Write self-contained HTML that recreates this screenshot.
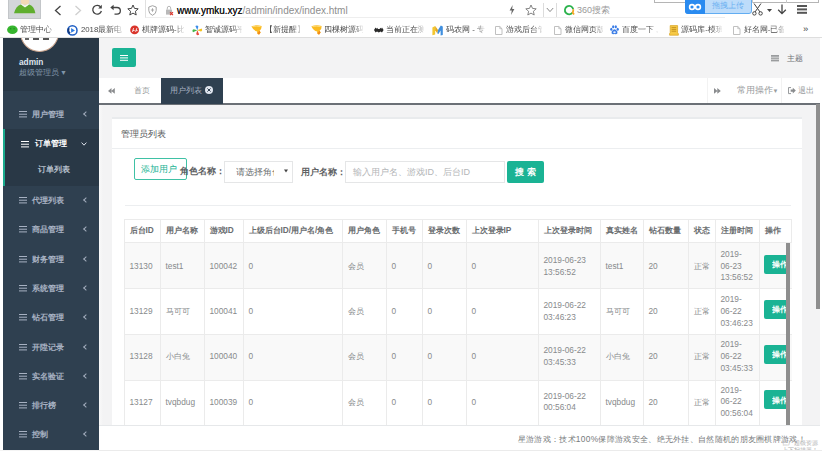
<!DOCTYPE html>
<html lang="zh">
<head>
<meta charset="utf-8">
<title>admin</title>
<style>
*{box-sizing:border-box;margin:0;padding:0}
html,body{width:822px;height:451px;overflow:hidden;background:#fff}
body{font-family:"Liberation Sans",sans-serif;font-size:8px;color:#676a6c;position:relative}
.a{position:absolute;white-space:nowrap;overflow:hidden}
.t{position:absolute;white-space:nowrap;line-height:10px;height:10px}
svg{position:absolute;overflow:visible}
/* browser chrome */
#chrome{left:0;top:0;width:822px;height:38px;background:#fff}
#bm .bt{font-size:7.8px;color:#4c4c4c;top:25px;overflow:hidden;-webkit-mask-image:linear-gradient(90deg,#000 0,#000 calc(100% - 9px),rgba(0,0,0,.15) 100%);mask-image:linear-gradient(90deg,#000 0,#000 calc(100% - 9px),rgba(0,0,0,.15) 100%)}
/* sidebar */
#side{left:3px;top:38px;width:96px;height:413px;background:#2f4050}
#side .hd{left:0;top:0;width:96px;height:53px;background:#293846}
#side .m{font-size:8.3px;font-weight:bold;color:#a7b1c2;left:29px}
#side .ic{position:absolute;left:16px;width:8px;height:1.4px;background:#a7b1c2;box-shadow:0 2.7px 0 #a7b1c2,0 5.4px 0 #a7b1c2;margin-top:-.4px}
#side .ar{left:80.5px;width:4px;height:4px;margin-top:3px;border-left:1.2px solid #a3adbd;border-bottom:1.2px solid #a3adbd;transform:rotate(45deg);font-size:0}
/* main */
#main{left:99px;top:38px;width:723px;height:413px;background:#f3f3f4}
#tb .th{font-size:8.3px;font-weight:bold;color:#6a6d6f}
#tb .td{font-size:8.3px;line-height:11.8px;color:#878a8c;white-space:nowrap}
</style>
</head>
<body>
<!-- ===== Browser chrome ===== -->
<div id="chrome" class="a">
  <!-- avatar -->
  <div class="a" style="left:8px;top:0;width:33px;height:19px;background:#d3d6d9;border:1px solid #c3c6c9;border-top:0"></div>
  <svg style="left:13px;top:0" width="24" height="14" viewBox="0 0 24 14"><path d="M1 13.2 Q3 5.6 8 4.4 L12 7 L16 4.4 Q21 5.6 22.4 13.2 Z" fill="#5fae2e"/><path d="M8 4.4 L12 7.6 L16 4.4 L14.6 3.6 L12 5.8 L9.4 3.6 Z" fill="#f4f7ee"/><ellipse cx="12" cy="1.6" rx="4.2" ry="3.2" fill="#f1d9b5"/></svg>
  <!-- nav buttons -->
  <svg style="left:54px;top:5px" width="8" height="11" viewBox="0 0 8 11"><path d="M6.5 1 L1.5 5.5 L6.5 10" fill="none" stroke="#444" stroke-width="1.3"/></svg>
  <svg style="left:74px;top:5px" width="8" height="11" viewBox="0 0 8 11"><path d="M1.5 1 L6.5 5.5 L1.5 10" fill="none" stroke="#cfcfcf" stroke-width="1.3"/></svg>
  <svg style="left:91px;top:4px" width="12" height="12" viewBox="0 0 12 12"><path d="M9.8 3.2 A4.4 4.4 0 1 0 10.4 7" fill="none" stroke="#444" stroke-width="1.3"/><path d="M10.8 0.8 L10.8 4.4 L7.2 4.4 Z" fill="#444"/></svg>
  <svg style="left:110px;top:4px" width="12" height="12" viewBox="0 0 12 12"><path d="M2 3.5 H7 A3.3 3.3 0 0 1 7 10.2 H4.5" fill="none" stroke="#444" stroke-width="1.3"/><path d="M0.3 3.5 L3.6 0.8 L3.6 6.2 Z" fill="#444"/></svg>
  <svg style="left:127px;top:4px" width="12" height="12" viewBox="0 0 12 12"><path d="M6 1 L7.5 4.4 L11.2 4.8 L8.4 7.3 L9.2 11 L6 9.1 L2.8 11 L3.6 7.3 L0.8 4.8 L4.5 4.4 Z" fill="none" stroke="#444" stroke-width="1"/></svg>
  <!-- url box -->
  <div class="a" style="left:145px;top:0;width:580px;height:18px;border:1px solid #eeeeee;border-left:1px solid #e0e0e0;border-top:0;border-right:0"></div>
  <svg style="left:148px;top:4.5px" width="9" height="11" viewBox="0 0 9 11"><path d="M4.5 0.7 L8.2 2 V5.5 Q8.2 8.8 4.5 10.3 Q0.8 8.8 0.8 5.5 V2 Z" fill="none" stroke="#9a9a9a" stroke-width="0.9"/><path d="M4.5 3.2 V6.8 M2.9 5 H6.1" stroke="#9a9a9a" stroke-width="0.8"/></svg>
  <svg style="left:165px;top:4.5px" width="9" height="11" viewBox="0 0 9 11"><rect x="1" y="4.6" width="6" height="5" fill="#b9b9b9"/><path d="M2.3 4.6 V3 A1.7 1.7 0 0 1 5.7 3 V4.6" fill="none" stroke="#b9b9b9" stroke-width="1"/><path d="M5 7.2 L8 10.2 M8 7.2 L5 10.2" stroke="#e0352b" stroke-width="1.1"/></svg>
  <div class="t" style="left:177px;top:5px;font-size:10px;line-height:12px;height:12px;color:#8e8e8e"><span style="color:#1c1c1c;text-shadow:0 0 .25px #1c1c1c">www.ymku.xyz</span>/admin/index/index.html</div>
  <!-- right side icons -->
  <svg style="left:509px;top:5px" width="6" height="10" viewBox="0 0 6 10"><path d="M3.6 0 L0.6 5.4 H2.8 L2 10 L5.4 4 H3.2 Z" fill="#666"/></svg>
  <svg style="left:525px;top:4px" width="12" height="12" viewBox="0 0 12 12"><path d="M6 1 L7.5 4.4 L11.2 4.8 L8.4 7.3 L9.2 11 L6 9.1 L2.8 11 L3.6 7.3 L0.8 4.8 L4.5 4.4 Z" fill="none" stroke="#777" stroke-width="0.9"/></svg>
  <div class="a" style="left:543px;top:3px;width:1px;height:14px;background:#dcdcdc"></div>
  <svg style="left:546px;top:7px" width="8" height="6" viewBox="0 0 8 6"><path d="M0.8 1 L4 4.6 L7.2 1" fill="none" stroke="#8a8a8a" stroke-width="1"/></svg>
  <div class="a" style="left:556px;top:3px;width:1px;height:14px;background:#dcdcdc"></div>
  <svg style="left:563px;top:4px" width="12" height="12" viewBox="0 0 12 12"><path d="M9.6 8.4 A4.2 4.2 0 1 1 10.2 5.2" fill="none" stroke="#2bb24c" stroke-width="1.8"/><path d="M10.2 5.2 A4.2 4.2 0 0 1 9.6 8.4 L11 10.4" fill="none" stroke="#f5a623" stroke-width="1.8"/></svg>
  <div class="t" style="left:577px;top:5px;font-size:9px;color:#9a9a9a">360搜索</div>
  <!-- floating box + blue upload button -->
  <div class="a" style="left:654px;top:-2px;width:165px;height:5px;background:#fff;border:1px solid #b5b5b5"></div>
  <div class="a" style="left:688px;top:0;width:1px;height:3px;background:#c9c9c9"></div>
  <div class="a" style="left:752px;top:0;width:1px;height:3px;background:#c9c9c9"></div>
  <div class="a" style="left:786px;top:0;width:1px;height:3px;background:#c9c9c9"></div>
  <div class="a" style="left:685px;top:-1px;width:66.5px;height:15px;background:#bddcfa;border:1px solid #62adf2;border-radius:0 0 3px 3px"></div>
  <div class="a" style="left:685px;top:0;width:20px;height:14px;background:#2a8bf0;border-radius:0 0 0 3px"></div>
  <svg style="left:688px;top:3px" width="14" height="8" viewBox="0 0 14 8"><circle cx="4" cy="4" r="2.4" fill="none" stroke="#fff" stroke-width="1.6"/><circle cx="10" cy="4" r="2.4" fill="none" stroke="#fff" stroke-width="1.6"/></svg>
  <div class="t" style="left:712px;top:1px;font-size:8px;color:#6cb1f1">拖拽上传</div>
  <!-- scissors, arrow, menu -->
  <svg style="left:752px;top:3px" width="11" height="13" viewBox="0 0 11 13"><path d="M2 0.5 L8 9 M9 0.5 L3 9" stroke="#444" stroke-width="1"/><circle cx="2.4" cy="10.4" r="1.7" fill="none" stroke="#444" stroke-width="1"/><circle cx="8.6" cy="10.4" r="1.7" fill="none" stroke="#444" stroke-width="1"/></svg>
  <svg style="left:767px;top:9px" width="5" height="3" viewBox="0 0 5 3"><path d="M0 0 H5 L2.5 3 Z" fill="#444"/></svg>
  <svg style="left:777px;top:4px" width="10" height="11" viewBox="0 0 10 11"><path d="M5 0.5 V9.5 M1.2 5.8 L5 9.6 L8.8 5.8" fill="none" stroke="#444" stroke-width="1.3"/></svg>
  <div class="a" style="left:797px;top:5px;width:10px;height:1.5px;background:#555;box-shadow:0 3.4px 0 #555,0 6.8px 0 #555;overflow:visible"></div>

  <!-- bookmarks bar -->
  <div id="bm">
    <svg style="left:7.2px;top:25px" width="11" height="10" viewBox="0 0 11 10"><ellipse cx="5.4" cy="4.8" rx="5.3" ry="4.3" fill="#36b52e"/><circle cx="3.7" cy="3.8" r=".7" fill="#1f8a1b"/><circle cx="7.1" cy="3.8" r=".7" fill="#1f8a1b"/></svg>
    <div class="t bt" style="left:20.4px;width:35.1px">管理中心 -</div>
    <svg style="left:67.3px;top:24.5px" width="11" height="11" viewBox="0 0 11 11"><circle cx="5.4" cy="5.4" r="4.6" fill="#fff" stroke="#1f5fc4" stroke-width="1.5"/><path d="M1 3 A4.8 4.8 0 0 0 2.5 9.2 L3.6 7.6 A3 3 0 0 1 2.8 3.6 Z" fill="#143a80"/><path d="M4.1 3.1 L8 5.4 L4.1 7.7 Z" fill="#2d7be0"/></svg>
    <div class="t bt" style="left:80.9px;width:41.1px">2018最新电</div>
    <svg style="left:130px;top:25px" width="10" height="10" viewBox="0 0 10 10"><circle cx="4.6" cy="4.9" r="4.4" fill="#d9342b"/><path d="M2.4 6.8 L3.6 3.2 M3 5.6 H4.6 M5.6 6.8 L6.8 3.2 M6.2 5.6 H7.6" stroke="#fff" stroke-width=".9" fill="none"/></svg>
    <div class="t bt" style="left:142.1px;width:41.9px">棋牌源码-比</div>
    <svg style="left:192.4px;top:24.5px" width="11" height="11" viewBox="0 0 11 11"><path d="M5.3 5.3 L3.4 1 Q5.3 -.4 6.4 1.6 Z" fill="#3b8de8"/><path d="M5.3 5.3 L9.6 3.4 Q11 5.3 9 6.4 Z" fill="#f5c21d"/><path d="M5.3 5.3 L7.2 9.6 Q5.3 11 4.2 9 Z" fill="#e8483b"/><path d="M5.3 5.3 L1 7.2 Q-.4 5.3 1.6 4.2 Z" fill="#45b54a"/></svg>
    <div class="t bt" style="left:205.2px;width:36.8px">智诚源码平</div>
    <svg style="left:250.6px;top:24.5px" width="12" height="11" viewBox="0 0 12 11"><path d="M0.4 1.2 Q5 -0.3 10.6 0.9 Q10.9 4 8.6 5.8 L9.6 7.4 L8.2 9.6 Q5.6 9.2 6.2 6.6 Q2.2 5.6 0.4 1.2 Z" fill="#fbbb21"/><path d="M8.6 5.8 L9.6 7.4 L8.2 9.6 Q6.8 9.4 6.4 8.2 Z" fill="#f28a1c"/><path d="M1.4 1.6 Q5 0.8 9.6 1.6" stroke="#fde08a" stroke-width=".8" fill="none"/></svg>
    <div class="t bt" style="left:264.6px;width:36.4px">【新提醒】</div>
    <svg style="left:310.7px;top:24.5px" width="12" height="11" viewBox="0 0 12 11"><path d="M0.4 1.2 Q5 -0.3 10.6 0.9 Q10.9 4 8.6 5.8 L9.6 7.4 L8.2 9.6 Q5.6 9.2 6.2 6.6 Q2.2 5.6 0.4 1.2 Z" fill="#fbbb21"/><path d="M8.6 5.8 L9.6 7.4 L8.2 9.6 Q6.8 9.4 6.4 8.2 Z" fill="#f28a1c"/><path d="M1.4 1.6 Q5 0.8 9.6 1.6" stroke="#fde08a" stroke-width=".8" fill="none"/></svg>
    <div class="t bt" style="left:323.5px;width:39.2px">四棵树源码</div>
    <svg style="left:373.6px;top:27px" width="10" height="6" viewBox="0 0 10 6"><path d="M0 3 L1.6 .4 L2.4 1.8 L3.2 .8 L4 2 H5.6 L6.4 .8 L7.2 1.8 L8 .4 L9.6 3 L8 5.4 L6.6 4.4 L4.8 5.6 L3 4.4 L1.6 5.4 Z" fill="#2a2a2a"/></svg>
    <div class="t bt" style="left:386.4px;width:37.6px">当前正在测</div>
    <svg style="left:432.4px;top:24.5px" width="12" height="11" viewBox="0 0 12 11"><path d="M0.4 2.6 L3.2 1 V9.6 L0.4 10.2 Z" fill="#f4c62e"/><path d="M3.2 1 L6 5 L5.4 8.6 L3.2 5.2 Z" fill="#e2a91e"/><path d="M6 5 L8.8 .6 L10.8 1.6 V10 L8.6 10.4 V5.4 L6.4 9 L5.4 8.6 Z" fill="#3f8fdf"/></svg>
    <div class="t bt" style="left:446px;width:38.5px">码农网 - 专</div>
    <svg style="left:494.5px;top:25.5px" width="8" height="9" viewBox="0 0 8 9"><path d="M.5 .5 H4.8 L7 2.7 V8.5 H.5 Z" fill="#fff" stroke="#b9b9b9" stroke-width=".9"/><path d="M4.8 .5 V2.7 H7" fill="none" stroke="#b9b9b9" stroke-width=".8"/></svg>
    <div class="t bt" style="left:505.6px;width:36.9px">游戏后台管</div>
    <svg style="left:554.1px;top:25.5px" width="8" height="9" viewBox="0 0 8 9"><path d="M.5 .5 H4.8 L7 2.7 V8.5 H.5 Z" fill="#fff" stroke="#b9b9b9" stroke-width=".9"/><path d="M4.8 .5 V2.7 H7" fill="none" stroke="#b9b9b9" stroke-width=".8"/></svg>
    <div class="t bt" style="left:564.7px;width:38.3px">微信网页版</div>
    <svg style="left:609.9px;top:25px" width="9" height="10" viewBox="0 0 9 10"><ellipse cx="1.3" cy="4.2" rx="1.1" ry="1.5" fill="#3a7ce6"/><ellipse cx="3.2" cy="1.8" rx="1.1" ry="1.5" fill="#3a7ce6"/><ellipse cx="5.8" cy="1.8" rx="1.1" ry="1.5" fill="#3a7ce6"/><ellipse cx="7.7" cy="4.2" rx="1.1" ry="1.5" fill="#3a7ce6"/><path d="M4.5 4.2 Q6.2 4.4 7.4 6.8 Q8 9 6 9.2 Q4.5 8.8 3 9.2 Q1 9 1.6 6.8 Q2.8 4.4 4.5 4.2 Z" fill="#3a7ce6"/><ellipse cx="4.5" cy="7.2" rx="1.3" ry="1" fill="#dfeafc"/></svg>
    <div class="t bt" style="left:621.8px;width:36.2px">百度一下 ,</div>
    <svg style="left:669px;top:24.5px" width="10" height="11" viewBox="0 0 10 11"><path d="M1.2 .6 H8.6 V7.6 Q9.6 8.4 9.4 10.2 H.6 Q.2 8.4 1.2 7.6 Z" fill="#f6c945" stroke="#d9a21f" stroke-width=".7"/><path d="M2.6 2.6 H7.2 M2.6 4.4 H7.2 M2.6 6.2 H7.2" stroke="#b98516" stroke-width=".8"/></svg>
    <div class="t bt" style="left:681.3px;width:41.2px">源码库-模班</div>
    <svg style="left:733.4px;top:25.5px" width="8" height="9" viewBox="0 0 8 9"><path d="M.5 .5 H4.8 L7 2.7 V8.5 H.5 Z" fill="#fff" stroke="#b9b9b9" stroke-width=".9"/><path d="M4.8 .5 V2.7 H7" fill="none" stroke="#b9b9b9" stroke-width=".8"/></svg>
    <div class="t bt" style="left:743.7px;width:40.8px">好名网-已备</div>
    <div class="t" style="left:803px;top:24px;color:#444;font-size:9.5px">»</div>
    </div>
  <div class="a" style="left:0;top:37px;width:822px;height:1px;background:#dedede"></div>
</div>

<!-- ===== Sidebar ===== -->
<div id="side" class="a">
  <div class="a hd"></div>
  <div class="a" style="left:17px;top:-25px;width:39px;height:39.4px;border-radius:50%;background:#fff;border:1px solid #c9a38c"></div>
  <div class="a" style="left:22px;top:0;width:4px;height:2px;background:#666"></div>
  <div class="a" style="left:30px;top:0;width:6px;height:2px;background:#555"></div>
  <div class="a" style="left:40px;top:0;width:6px;height:2px;background:#555"></div>
  <div class="t" style="left:16px;top:18.5px;font-size:8.3px;font-weight:bold;color:#dfe4ed">admin</div>
  <div class="t" style="left:16px;top:28.5px;font-size:8.3px;color:#8095a8">超级管理员<span style="font-size:7px;position:relative;top:0;left:1px">▼</span></div>

  <div class="ic" style="top:73px"></div><div class="t m" style="top:71px">用户管理</div><div class="t m ar" style="top:71px">‹</div>

  <div class="a" style="left:0;top:91px;width:96px;height:57px;background:#293846;border-left:2px solid #19aa8d"></div>
  <div class="ic" style="top:103px;background:#fff;box-shadow:0 2.7px 0 #fff,0 5.4px 0 #fff;left:18px"></div><div class="t m" style="top:100.4px;color:#fff;left:32px">订单管理</div>
  <svg style="left:78px;top:104px" width="6" height="4" viewBox="0 0 6 4"><path d="M0.6 0.6 L3 3.2 L5.4 0.6" fill="none" stroke="#dfe4ed" stroke-width="1"/></svg>
  <div class="t m" style="top:126px;left:35px;color:#b7c0cd">订单列表</div>

  <div class="ic" style="top:159px"></div><div class="t m" style="top:157px">代理列表</div><div class="t m ar" style="top:157px">‹</div>
  <div class="ic" style="top:188px"></div><div class="t m" style="top:186px">商品管理</div><div class="t m ar" style="top:186px">‹</div>
  <div class="ic" style="top:218px"></div><div class="t m" style="top:216px">财务管理</div><div class="t m ar" style="top:216px">‹</div>
  <div class="ic" style="top:247px"></div><div class="t m" style="top:245px">系统管理</div><div class="t m ar" style="top:245px">‹</div>
  <div class="ic" style="top:276px"></div><div class="t m" style="top:274px">钻石管理</div><div class="t m ar" style="top:274px">‹</div>
  <div class="ic" style="top:306px"></div><div class="t m" style="top:304px">开陞记录</div><div class="t m ar" style="top:304px">‹</div>
  <div class="ic" style="top:335px"></div><div class="t m" style="top:333px">实名验证</div><div class="t m ar" style="top:333px">‹</div>
  <div class="ic" style="top:364px"></div><div class="t m" style="top:362px">排行榜</div><div class="t m ar" style="top:362px">‹</div>
  <div class="ic" style="top:393px"></div><div class="t m" style="top:391px">控制</div><div class="t m ar" style="top:391px">‹</div>
</div>

<!-- ===== Main ===== -->
<div id="main" class="a">
  <!-- navbar -->
  <div class="a" style="left:13px;top:10px;width:24px;height:19px;background:#1ab394;border-radius:2px"></div>
  <div class="a" style="left:21px;top:16.5px;width:8px;height:1.4px;background:#fff;box-shadow:0 2.4px 0 #fff,0 4.8px 0 #fff;overflow:visible"></div>
  <svg style="left:672px;top:16.5px" width="8" height="7" viewBox="0 0 8 7"><rect x="0" y="0" width="8" height="6.4" fill="#9a9c9e"/><path d="M0 2.2 H8 M0 4.3 H8" stroke="#f3f3f4" stroke-width="0.7"/></svg>
  <div class="t" style="left:688px;top:14.5px;font-size:8.3px;color:#6f7274">主题</div>

  <!-- tab bar -->
  <div class="a" style="left:0;top:40px;width:723px;height:26px;background:#fff"></div>
  <div class="a" style="left:0;top:65px;width:721px;height:2px;background:#6b7076"></div>
  <svg style="left:9.2px;top:50.2px" width="7" height="6" viewBox="0 0 7 6"><path d="M3.5 0 V5.8 L0 2.9 Z M6.8 0 V5.8 L3.3 2.9 Z" fill="#8a8c8e"/></svg>
  <div class="t" style="left:35px;top:47px;font-size:8.3px;color:#999c9e">首页</div>
  <div class="a" style="left:62px;top:40px;width:62px;height:26px;background:#2f4050"></div>
  <div class="t" style="left:71px;top:47px;font-size:8.3px;color:#a7b1c2">用户列表</div>
  <div class="a" style="left:106.3px;top:48px;width:8px;height:8px;border-radius:50%;background:#dfe4ed"></div>
  <svg style="left:108.3px;top:50px" width="4" height="4" viewBox="0 0 4 4"><path d="M0.4 0.4 L3.6 3.6 M3.6 0.4 L0.4 3.6" stroke="#2f4050" stroke-width="1"/></svg>
  <div class="a" style="left:608px;top:40px;width:1px;height:25px;background:#f2f2f2"></div>
  <svg style="left:615px;top:49.8px" width="7" height="6" viewBox="0 0 7 6"><path d="M0 0 V5.8 L3.5 2.9 Z M3.3 0 V5.8 L6.8 2.9 Z" fill="#8a8c8e"/></svg>
  <div class="t" style="left:638px;top:47.2px;font-size:8.5px;color:#999c9e">常用操作<span style="font-size:6px;position:relative;top:-.5px;left:-.5px">▼</span></div>
  <div class="a" style="left:682px;top:40px;width:1px;height:25px;background:#f2f2f2"></div>
  <svg style="left:689px;top:48.5px" width="8" height="7.2" viewBox="0 0 9 8"><path d="M3.4 0.6 H0.6 V7.4 H3.4" fill="none" stroke="#8a8c8e" stroke-width="1"/><path d="M3 2.8 H5.4 V0.8 L8.8 4 L5.4 7.2 V5.2 H3 Z" fill="#8a8c8e"/></svg>
  <div class="t" style="left:699px;top:47.2px;font-size:8.3px;color:#999c9e">退出</div>

  <!-- outer scrollbar thumb -->
  <div class="a" style="left:717px;top:66px;width:4px;height:205px;background:#8e8e8e"></div>
  <div class="a" style="left:721px;top:0;width:2px;height:413px;background:#fff"></div>

  <!-- ibox -->
  <div class="a" style="left:0;top:67px;width:4px;height:321px;background:linear-gradient(90deg,#f9f9f9,#f3f3f4)"></div>
  <div class="a" style="left:13px;top:79px;width:690px;height:334px;background:#fff;border-top:2px solid #e9ebed"></div>
  <div class="t" style="left:22px;top:91px;font-size:9px;color:#56595b">管理员列表</div>
  <div class="a" style="left:13px;top:110px;width:690px;height:1px;background:#eceef0"></div>

  <!-- form row -->
  <div class="a" style="left:35px;top:120px;width:53px;height:22px;border:1px solid #3fc1a5;border-radius:2px;background:#fff"></div>
  <div class="t" style="left:42px;top:126px;font-size:9px;color:#1ab394">添加用户</div>
  <div class="t" style="left:81px;top:128px;font-size:9px;font-weight:bold;color:#5e6163">角色名称：</div>
  <div class="a" style="left:125px;top:123px;width:69px;height:22px;border:1px solid #e5e6e7;background:#fff"></div>
  <div class="t" style="left:137px;top:129px;font-size:9px;color:#6c6f71;width:38px;overflow:hidden">请选择角色</div>
  <svg style="left:185px;top:131px" width="4" height="4" viewBox="0 0 4 4"><path d="M0 0.4 H4 L2 3.6 Z" fill="#444"/></svg>
  <div class="t" style="left:202px;top:129px;font-size:9px;font-weight:bold;color:#5e6163">用户名称：</div>
  <div class="a" style="left:246px;top:123px;width:160px;height:22px;border:1px solid #e5e6e7;background:#fff"></div>
  <div class="t" style="left:254px;top:129px;font-size:9px;color:#b4b6b8">输入用户名、游戏ID、后台ID</div>
  <div class="a" style="left:408px;top:123px;width:37px;height:22px;background:#1ab394;border-radius:2px"></div>
  <div class="t" style="left:416px;top:129px;font-size:9px;font-weight:bold;color:#fff">搜 索</div>
  <div class="a" style="left:26px;top:167px;width:666px;height:1px;background:#eceef0"></div>

  <!-- table -->
  <div id="tb" class="a" style="left:25px;top:181px;width:668px;height:208px">
  <div class="a" style="left:0;top:0;width:668px;height:1px;background:#ebebeb"></div>
  <div class="a" style="left:0;top:23px;width:668px;height:46px;background:#f9f9f9;border-top:1px solid #ebebeb"></div>
  <div class="a" style="left:0;top:69px;width:668px;height:46px;background:#fff;border-top:1px solid #ebebeb"></div>
  <div class="a" style="left:0;top:115px;width:668px;height:46px;background:#f9f9f9;border-top:1px solid #ebebeb"></div>
  <div class="a" style="left:0;top:161px;width:668px;height:47px;background:#fff;border-top:1px solid #ebebeb"></div>
  <div class="a" style="left:0px;top:0;width:1px;height:208px;background:#ebebeb"></div>
  <div class="a" style="left:36px;top:0;width:1px;height:208px;background:#ebebeb"></div>
  <div class="a" style="left:80px;top:0;width:1px;height:208px;background:#ebebeb"></div>
  <div class="a" style="left:119px;top:0;width:1px;height:208px;background:#ebebeb"></div>
  <div class="a" style="left:218px;top:0;width:1px;height:208px;background:#ebebeb"></div>
  <div class="a" style="left:262px;top:0;width:1px;height:208px;background:#ebebeb"></div>
  <div class="a" style="left:298px;top:0;width:1px;height:208px;background:#ebebeb"></div>
  <div class="a" style="left:342px;top:0;width:1px;height:208px;background:#ebebeb"></div>
  <div class="a" style="left:414px;top:0;width:1px;height:208px;background:#ebebeb"></div>
  <div class="a" style="left:476px;top:0;width:1px;height:208px;background:#ebebeb"></div>
  <div class="a" style="left:519px;top:0;width:1px;height:208px;background:#ebebeb"></div>
  <div class="a" style="left:564px;top:0;width:1px;height:208px;background:#ebebeb"></div>
  <div class="a" style="left:591px;top:0;width:1px;height:208px;background:#ebebeb"></div>
  <div class="a" style="left:635px;top:0;width:1px;height:208px;background:#ebebeb"></div>
  <div class="a" style="left:667px;top:0;width:1px;height:23px;background:#ebebeb"></div>
  <div class="t th" style="left:5.5px;top:6px">后台ID</div>
  <div class="t th" style="left:41.5px;top:6px">用户名称</div>
  <div class="t th" style="left:85.5px;top:6px">游戏ID</div>
  <div class="t th" style="left:124.5px;top:6px">上级后台ID/用户名/角色</div>
  <div class="t th" style="left:223.5px;top:6px">用户角色</div>
  <div class="t th" style="left:267.5px;top:6px">手机号</div>
  <div class="t th" style="left:303.5px;top:6px">登录次数</div>
  <div class="t th" style="left:347.5px;top:6px">上次登录IP</div>
  <div class="t th" style="left:419.5px;top:6px">上次登录时间</div>
  <div class="t th" style="left:481.5px;top:6px">真实姓名</div>
  <div class="t th" style="left:524.5px;top:6px">钻石数量</div>
  <div class="t th" style="left:569.5px;top:6px">状态</div>
  <div class="t th" style="left:596.5px;top:6px">注册时间</div>
  <div class="t th" style="left:640.5px;top:6px">操作</div>
  <div class="t td" style="left:5.5px;top:41.7px;height:11.8px">13130</div>
  <div class="t td" style="left:41.5px;top:41.7px;height:11.8px">test1</div>
  <div class="t td" style="left:85.5px;top:41.7px;height:11.8px">100042</div>
  <div class="t td" style="left:124.5px;top:41.7px;height:11.8px">0</div>
  <div class="t td" style="left:223.5px;top:41.7px;height:11.8px">会员</div>
  <div class="t td" style="left:267.5px;top:41.7px;height:11.8px">0</div>
  <div class="t td" style="left:303.5px;top:41.7px;height:11.8px">0</div>
  <div class="t td" style="left:347.5px;top:41.7px;height:11.8px">0</div>
  <div class="t td" style="left:419.5px;top:35.8px;height:23.6px">2019-06-23<br>13:56:52</div>
  <div class="t td" style="left:481.5px;top:41.7px;height:11.8px">test1</div>
  <div class="t td" style="left:524.5px;top:41.7px;height:11.8px">20</div>
  <div class="t td" style="left:569.5px;top:41.7px;height:11.8px">正常</div>
  <div class="t td" style="left:596.5px;top:29.9px;height:35.4px">2019-<br>06-23<br>13:56:52</div>
  <div class="a" style="left:640px;top:35.8px;width:22px;height:19px;background:#1ab394;border-radius:2px 0 0 2px"></div>
  <div class="t" style="left:647.5px;top:40.1px;font-size:8.3px;font-weight:bold;color:#fff;width:14px;overflow:hidden">操作</div>
  <div class="t td" style="left:5.5px;top:87.0px;height:11.8px">13129</div>
  <div class="t td" style="left:41.5px;top:87.0px;height:11.8px">马可可</div>
  <div class="t td" style="left:85.5px;top:87.0px;height:11.8px">100041</div>
  <div class="t td" style="left:124.5px;top:87.0px;height:11.8px">0</div>
  <div class="t td" style="left:223.5px;top:87.0px;height:11.8px">会员</div>
  <div class="t td" style="left:267.5px;top:87.0px;height:11.8px">0</div>
  <div class="t td" style="left:303.5px;top:87.0px;height:11.8px">0</div>
  <div class="t td" style="left:347.5px;top:87.0px;height:11.8px">0</div>
  <div class="t td" style="left:419.5px;top:81.1px;height:23.6px">2019-06-22<br>03:46:23</div>
  <div class="t td" style="left:481.5px;top:87.0px;height:11.8px">马可可</div>
  <div class="t td" style="left:524.5px;top:87.0px;height:11.8px">20</div>
  <div class="t td" style="left:569.5px;top:87.0px;height:11.8px">正常</div>
  <div class="t td" style="left:596.5px;top:75.2px;height:35.4px">2019-<br>06-22<br>03:46:23</div>
  <div class="a" style="left:640px;top:80.9px;width:22px;height:19px;background:#1ab394;border-radius:2px 0 0 2px"></div>
  <div class="t" style="left:647.5px;top:85.2px;font-size:8.3px;font-weight:bold;color:#fff;width:14px;overflow:hidden">操作</div>
  <div class="t td" style="left:5.5px;top:132.2px;height:11.8px">13128</div>
  <div class="t td" style="left:41.5px;top:132.2px;height:11.8px">小白兔</div>
  <div class="t td" style="left:85.5px;top:132.2px;height:11.8px">100040</div>
  <div class="t td" style="left:124.5px;top:132.2px;height:11.8px">0</div>
  <div class="t td" style="left:223.5px;top:132.2px;height:11.8px">会员</div>
  <div class="t td" style="left:267.5px;top:132.2px;height:11.8px">0</div>
  <div class="t td" style="left:303.5px;top:132.2px;height:11.8px">0</div>
  <div class="t td" style="left:347.5px;top:132.2px;height:11.8px">0</div>
  <div class="t td" style="left:419.5px;top:126.3px;height:23.6px">2019-06-22<br>03:45:33</div>
  <div class="t td" style="left:481.5px;top:132.2px;height:11.8px">小白兔</div>
  <div class="t td" style="left:524.5px;top:132.2px;height:11.8px">20</div>
  <div class="t td" style="left:569.5px;top:132.2px;height:11.8px">正常</div>
  <div class="t td" style="left:596.5px;top:120.4px;height:35.4px">2019-<br>06-22<br>03:45:33</div>
  <div class="a" style="left:640px;top:125.9px;width:22px;height:19px;background:#1ab394;border-radius:2px 0 0 2px"></div>
  <div class="t" style="left:647.5px;top:130.2px;font-size:8.3px;font-weight:bold;color:#fff;width:14px;overflow:hidden">操作</div>
  <div class="t td" style="left:5.5px;top:177.5px;height:11.8px">13127</div>
  <div class="t td" style="left:41.5px;top:177.5px;height:11.8px">tvqbdug</div>
  <div class="t td" style="left:85.5px;top:177.5px;height:11.8px">100039</div>
  <div class="t td" style="left:124.5px;top:177.5px;height:11.8px">0</div>
  <div class="t td" style="left:223.5px;top:177.5px;height:11.8px">会员</div>
  <div class="t td" style="left:267.5px;top:177.5px;height:11.8px">0</div>
  <div class="t td" style="left:303.5px;top:177.5px;height:11.8px">0</div>
  <div class="t td" style="left:347.5px;top:177.5px;height:11.8px">0</div>
  <div class="t td" style="left:419.5px;top:171.6px;height:23.6px">2019-06-22<br>00:56:04</div>
  <div class="t td" style="left:481.5px;top:177.5px;height:11.8px">tvqbdug</div>
  <div class="t td" style="left:524.5px;top:177.5px;height:11.8px">20</div>
  <div class="t td" style="left:569.5px;top:177.5px;height:11.8px">正常</div>
  <div class="t td" style="left:596.5px;top:165.7px;height:35.4px">2019-<br>06-22<br>00:56:04</div>
  <div class="a" style="left:640px;top:171.3px;width:22px;height:19px;background:#1ab394;border-radius:2px 0 0 2px"></div>
  <div class="t" style="left:647.5px;top:175.6px;font-size:8.3px;font-weight:bold;color:#fff;width:14px;overflow:hidden">操作</div>
  <div class="a" style="left:662px;top:24px;width:4px;height:184px;background:#8e8e8e"></div>
  </div>

  <!-- footer -->
  <div class="a" style="left:0;top:387px;width:721px;height:26px;background:#fff;border-top:1px solid #e6e8ea"></div>
  <div class="t" style="right:16px;top:396px;font-size:8.4px;letter-spacing:.3px;color:#777a7c">星游游戏：技术100%保障游戏安全、绝无外挂、自然随机的朋友圈棋牌游戏！</div>
  <div class="t" style="right:4px;top:401px;font-size:6.2px;line-height:7px;height:14px;color:#b2b2b2;text-align:right">仁厂超级资源<br>上下扫描器！</div>
</div>
<div class="a" style="left:0;top:449.5px;width:99px;height:2px;background:#f4f4f4"></div>
<div class="a" style="left:99px;top:449.5px;width:723px;height:2px;background:#ebebeb"></div>
</body>
</html>
